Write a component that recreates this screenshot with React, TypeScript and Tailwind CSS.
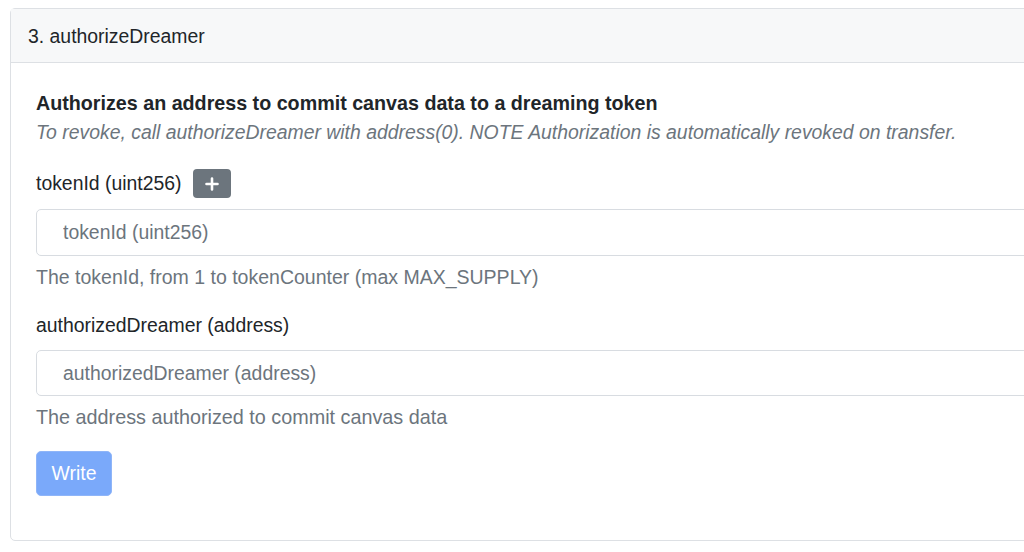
export default function App() {
  return (
    <div className="min-h-[552px] w-[1024px] overflow-hidden bg-white pl-[10px] pt-2 font-['Liberation_Sans',Arial,sans-serif] text-[#212529]">
      <div className="w-[1040px] rounded-[5px] border border-[#dde0e4]">
        {/* Header */}
        <div className="flex h-[54px] items-center border-b border-[#dde0e4] bg-[#f7f8f9] pl-[17px] pt-[2px] text-[19.4px]">
          3. authorizeDreamer
        </div>

        {/* Body */}
        <div className="pl-[25px] pt-[28px] pb-[44px]">
          <div className="text-[19.7px] font-bold leading-[25px]">
            Authorizes an address to commit canvas data to a dreaming token
          </div>
          <div className="mt-[4px] text-[19.4px] italic leading-[25px] text-[#6c757d]">
            To revoke, call authorizeDreamer with address(0). NOTE Authorization is automatically revoked on transfer.
          </div>

          <div className="mt-[24px] flex h-[29px] items-center gap-[11px] text-[19.4px]">
            <span>tokenId (uint256)</span>
            <button className="flex h-[29px] w-[38px] items-center justify-center rounded-[4px] bg-[#6c757d] text-white">
              <svg width="14" height="14" viewBox="0 0 14 14">
                <path d="M7 1.5v11M1.5 7h11" stroke="white" strokeWidth="2.6" strokeLinecap="round" />
              </svg>
            </button>
          </div>

          <input
            className="mt-[11px] block h-[47px] w-[1010px] rounded-[5px] border border-[#d8dce1] bg-white pl-[26px] text-[19.4px] outline-none placeholder:text-[#6c757d]"
            placeholder="tokenId (uint256)"
          />
          <div className="mt-[9px] text-[19.5px] leading-[25px] text-[#6c757d]">
            The tokenId, from 1 to tokenCounter (max MAX_SUPPLY)
          </div>

          <div className="mt-[23px] text-[19.4px] leading-[25px]">authorizedDreamer (address)</div>
          <input
            className="mt-[12px] block h-[46px] w-[1010px] rounded-[5px] border border-[#d8dce1] bg-white pl-[26px] text-[19.4px] outline-none placeholder:text-[#6c757d]"
            placeholder="authorizedDreamer (address)"
          />
          <div className="mt-[9px] text-[19.8px] leading-[25px] text-[#6c757d]">
            The address authorized to commit canvas data
          </div>

          <button className="mt-[21px] flex h-[45px] w-[76px] items-center justify-center rounded-[5px] border border-[#8fb5f8] bg-[#7aa9fa] text-[19.4px] text-white">
            Write
          </button>
        </div>
      </div>
    </div>
  );
}
